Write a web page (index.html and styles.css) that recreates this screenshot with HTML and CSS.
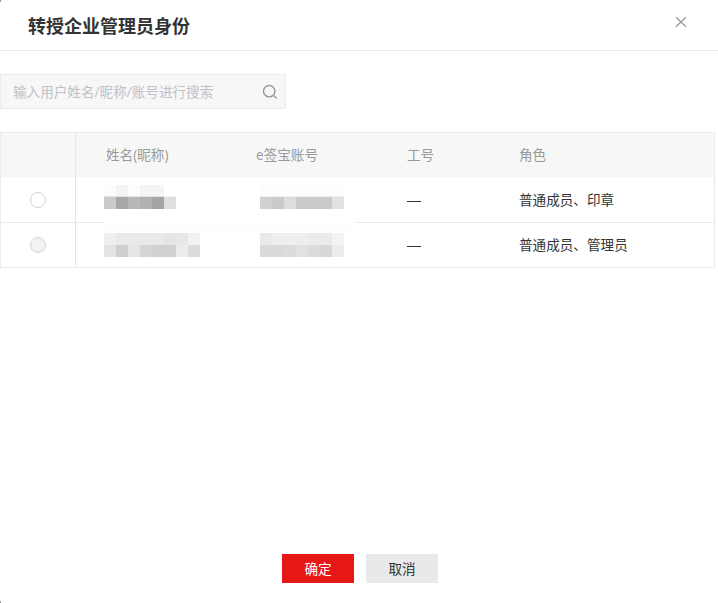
FILE: index.html
```html
<!DOCTYPE html>
<html lang="zh-CN">
<head>
<meta charset="utf-8">
<title>转授企业管理员身份</title>
<link rel="stylesheet" href="styles.css">
</head>
<body>
<div class="dialog">
  <header class="dialog-header">
    <h1 class="dialog-title">转授企业管理员身份</h1>
    <svg class="close" width="12" height="12" viewBox="0 0 12 12"><path d="M1 1.2 11 10.8M11 1.2 1 10.8"/></svg>
  </header>
  <div class="search">
    <span class="placeholder">输入用户姓名/昵称/账号进行搜索</span>
    <svg class="search-icon" width="16" height="16" viewBox="0 0 16 16"><circle cx="7.2" cy="7.2" r="5.7"/><path d="M11.5 11.5 14.7 14.2"/></svg>
  </div>
  <div class="table">
    <div class="row head">
      <div class="cell pick"></div>
      <div class="cell name">姓名(昵称)</div>
      <div class="cell">e签宝账号</div>
      <div class="cell">工号</div>
      <div class="cell">角色</div>
    </div>
    <div class="row">
      <div class="cell pick"><span class="radio"></span></div>
      <div class="cell name"></div>
      <div class="cell"></div>
      <div class="cell"><span class="dash"></span></div>
      <div class="cell">普通成员、印章</div>
    </div>
    <div class="row last">
      <div class="cell pick"><span class="radio disabled"></span></div>
      <div class="cell name"></div>
      <div class="cell"></div>
      <div class="cell"><span class="dash"></span></div>
      <div class="cell">普通成员、管理员</div>
    </div>
    <svg class="mosaic" width="252" height="73" viewBox="0 0 252 73" shape-rendering="crispEdges">
      <path fill="#fefefe" d="M0 36h252v13H0z"/>
      <g>
        <path fill="#fcfcfc" d="M0 1h12v11H0zM24 1h12v11H24z"/>
        <path fill="#f4f4f4" d="M12 1h12v11H12zM36 1h24v11H36z"/>
        <path fill="#cbcbcb" d="M0 13h12v12H0z"/>
        <path fill="#a8a8a8" d="M12 13h12v12H12z"/>
        <path fill="#b8b8b8" d="M24 13h12v12H24z"/>
        <path fill="#b1b1b1" d="M36 13h12v12H36z"/>
        <path fill="#a5a5a5" d="M48 13h12v12H48z"/>
        <path fill="#dfdfdf" d="M60 13h12v12H60z"/>
        <path fill="#e4e4e4" d="M0 12h60v1H0z"/>
        <path fill="#f2f2f2" d="M60 12h12v1H60z"/>
      </g>
      <g>
        <path fill="#fdfdfd" d="M156 1h84v11h-84z"/>
        <path fill="#f0f0f0" d="M156 12h84v1h-84z"/>
        <path fill="#d1d1d1" d="M156 13h12v12h-12z"/>
        <path fill="#cacaca" d="M168 13h12v12h-12zM192 13h36v12h-36z"/>
        <path fill="#dddddd" d="M180 13h12v12h-12z"/>
        <path fill="#e1e1e1" d="M228 13h12v12h-12z"/>
      </g>
      <g>
        <path fill="#efefef" d="M0 49h12v12H0z"/>
        <path fill="#e9e9e9" d="M12 49h48v12H12z"/>
        <path fill="#e4e4e4" d="M60 49h12v12H60z"/>
        <path fill="#e7e7e7" d="M72 49h12v12H72z"/>
        <path fill="#f2f2f2" d="M84 49h12v12H84z"/>
        <path fill="#e3e3e3" d="M0 61h12v12H0z"/>
        <path fill="#cfcfcf" d="M12 61h12v12H12z"/>
        <path fill="#e6e6e6" d="M24 61h12v12H24z"/>
        <path fill="#d6d6d6" d="M36 61h12v12H36z"/>
        <path fill="#d1d1d1" d="M48 61h24v12H48z"/>
        <path fill="#ececec" d="M72 61h12v12H72z"/>
        <path fill="#dcdcdc" d="M84 61h12v12H84z"/>
      </g>
      <g>
        <path fill="#e9e9e9" d="M156 49h12v12h-12z"/>
        <path fill="#eeeeee" d="M168 49h36v12h-36z"/>
        <path fill="#ebebeb" d="M204 49h24v12h-24z"/>
        <path fill="#f3f3f3" d="M228 49h12v12h-12z"/>
        <path fill="#dadada" d="M156 61h24v12h-24z"/>
        <path fill="#dcdcdc" d="M180 61h12v12h-12zM204 61h12v12h-12z"/>
        <path fill="#e1e1e1" d="M192 61h12v12h-12z"/>
        <path fill="#d8d8d8" d="M216 61h12v12h-12z"/>
        <path fill="#ececec" d="M228 61h12v12h-12z"/>
      </g>
    </svg>
  </div>
  <footer class="actions">
    <div class="button primary">确定</div>
    <div class="button">取消</div>
  </footer>
</div>
</body>
</html>
```
FILE: styles.css
```css
* { box-sizing: border-box; }
body {
  margin: 0;
  background: #fff;
  color: #333;
  font-family: "Open Sans", "Noto Sans CJK SC", sans-serif;
  font-size: 13.6px;
}
.dialog {
  position: relative;
  display: flex;
  flex-direction: column;
  width: 718px;
  height: 603px;
  padding-bottom: 20px;
  overflow: hidden;
}
.dialog::before,
.dialog::after {
  content: "";
  position: absolute;
  left: 0;
  width: 1px;
  height: 2px;
  background: #999;
}
.dialog::before { top: 0; }
.dialog::after { bottom: 0; }
.dialog-header {
  display: flex;
  justify-content: space-between;
  height: 51px;
  padding: 0 31px 0 28px;
  border-bottom: 1px solid #ebebeb;
}
.dialog-title {
  margin: 0;
  font-size: 18px;
  font-weight: 700;
  line-height: 52px;
}
.close {
  margin-top: 16px;
  stroke: #999;
  stroke-width: 1.3;
}
.search {
  display: flex;
  align-items: center;
  justify-content: space-between;
  width: 286px;
  height: 35px;
  margin-top: 23px;
  padding: 0 7px 0 12px;
  border: 1px solid #ebebeb;
  background: #f7f7f7;
}
.placeholder {
  line-height: 33px;
  color: #c0c0c8;
}
.search-icon {
  fill: none;
  stroke: #96969c;
  stroke-width: 1.4;
}
.table {
  position: relative;
  width: 715px;
  margin-top: 23px;
  border: 1px solid #ebebeb;
}
.row {
  display: grid;
  grid-template-columns: 75px 180px 151px 112px 1fr;
  height: 46px;
  border-bottom: 1px solid #ebebeb;
}
.head {
  height: 44px;
  border: 0;
  background: #f7f7f7;
  color: #999;
}
.last {
  height: 44px;
  border: 0;
}
.cell {
  display: flex;
  align-items: center;
  line-height: 20px;
}
.pick {
  justify-content: center;
  border-right: 1px solid #e6e6e6;
}
.name { padding-left: 30px; }
.radio {
  width: 16px;
  height: 16px;
  border: 1px solid #d4d4d4;
  border-radius: 50%;
}
.disabled { background: #f3f3f3; }
.dash {
  width: 14px;
  height: 1px;
  margin-top: 3px;
  background: #333;
}
.mosaic {
  position: absolute;
  left: 103px;
  top: 51px;
}
.actions {
  display: flex;
  justify-content: center;
  gap: 12px;
  margin-top: auto;
  padding-left: 2px;
}
.button {
  width: 72px;
  height: 29px;
  line-height: 29px;
  text-align: center;
  background: #e9e9eb;
}
.primary {
  background: #e61717;
  color: #fff;
}
```
